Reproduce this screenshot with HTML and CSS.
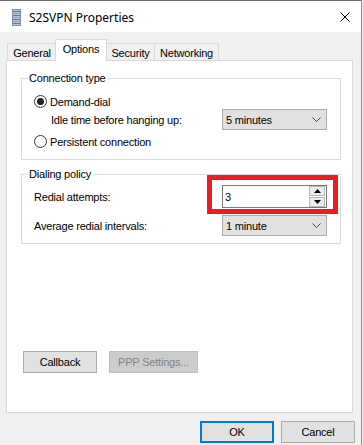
FILE: index.html
```html
<!DOCTYPE html>
<html lang="en">
<head>
<meta charset="UTF-8">
<meta name="viewport" content="width=device-width, initial-scale=1.0">
<title>S2SVPN Properties</title>
<link rel="stylesheet" href="styles.css">
</head>
<body>

<div class="window">
  <!-- title bar -->
  <div class="titlebar">
    <svg class="app-icon" width="9" height="17" viewBox="0 0 9 17">
      <rect x="0.5" y="0.5" width="8" height="16" fill="#b8c6d8" stroke="#7f8fa6"/>
      <rect x="1" y="2" width="7" height="1" fill="#5f7594"/>
      <rect x="1" y="4" width="7" height="1" fill="#8fa3bd"/>
      <rect x="1" y="6" width="7" height="1" fill="#5f7594"/>
      <rect x="1" y="8" width="7" height="1" fill="#8fa3bd"/>
      <rect x="1" y="10" width="7" height="1" fill="#5f7594"/>
      <rect x="1" y="12" width="7" height="1" fill="#8fa3bd"/>
      <rect x="1" y="14" width="7" height="1" fill="#5f7594"/>
    </svg>
    <span class="title">S2SVPN Properties</span>
    <svg class="close" width="10" height="10" viewBox="0 0 10 10">
      <path d="M0.5 0.5 L9.5 9.5 M9.5 0.5 L0.5 9.5" stroke="#000" stroke-width="1"/>
    </svg>
  </div>

  <div class="client">
    <!-- tabs -->
    <div class="tabs">
      <div class="tab tab-general">General</div>
      <div class="tab tab-options selected">Options</div>
      <div class="tab tab-security">Security</div>
      <div class="tab tab-networking">Networking</div>
    </div>

    <div class="panel">
      <fieldset class="group group-connection">
        <legend>Connection type</legend>
        <div class="radio-row">
          <span class="radio checked"></span>
          <span>Demand-dial</span>
        </div>
        <div class="field-row indent">
          <span class="field-label">Idle time before hanging up:</span>
          <div class="select">
            <span>5 minutes</span>
            <svg class="chevron" width="9" height="5" viewBox="0 0 9 5"><path d="M0.5 0.5 L4.5 4.5 L8.5 0.5" fill="none" stroke="#444"/></svg>
          </div>
        </div>
        <div class="radio-row persistent">
          <span class="radio"></span>
          <span>Persistent connection</span>
        </div>
      </fieldset>

      <fieldset class="group group-dialing">
        <legend>Dialing policy</legend>
        <div class="field-row redial">
          <span class="field-label">Redial attempts:</span>
          <div class="spin">
            <span class="spin-value">3</span>
            <div class="spin-buttons">
              <span class="spin-btn"><svg width="7" height="4" viewBox="0 0 7 4"><path d="M3.5 0 L7 4 L0 4 Z" fill="#000"/></svg></span>
              <span class="spin-btn"><svg width="7" height="4" viewBox="0 0 7 4"><path d="M0 0 L7 0 L3.5 4 Z" fill="#000"/></svg></span>
            </div>
            <div class="highlight"></div>
          </div>
        </div>
        <div class="field-row average">
          <span class="field-label">Average redial intervals:</span>
          <div class="select">
            <span>1 minute</span>
            <svg class="chevron" width="9" height="5" viewBox="0 0 9 5"><path d="M0.5 0.5 L4.5 4.5 L8.5 0.5" fill="none" stroke="#444"/></svg>
          </div>
        </div>
      </fieldset>

      <div class="panel-buttons">
        <button class="btn btn-callback">Callback</button>
        <button class="btn btn-ppp" disabled>PPP Settings...</button>
      </div>
    </div>

    <!-- dialog buttons -->
    <div class="dialog-buttons">
      <button class="btn btn-ok">OK</button>
      <button class="btn btn-cancel">Cancel</button>
    </div>
  </div>
</div>

</body>
</html>
```

FILE: styles.css
```css
body {
  margin: 0;
  width: 363px;
  height: 445px;
  overflow: hidden;
  background-color: #f0f0f0;
  font-family: 'Liberation Sans', Arial, sans-serif;
  font-size: 11px;
  letter-spacing: -0.2px;
  color: #000;
}
.window {
  width: 361px;
  height: 445px;
  border-right: 1px solid #8f8f8f;
  background-color: #f0f0f0;
}
.titlebar {
  height: 31px;
  border-top: 1px solid #6d6d6d;
  background-color: #fff;
  display: flex;
  align-items: center;
}
.app-icon {
  margin-left: 12px;
  margin-top: 1px;
}
.title {
  margin-left: 8px;
  font-family: 'Noto Sans', 'Open Sans', sans-serif;
  font-size: 12px;
  letter-spacing: 0;
  margin-top: 1px;
}
.close {
  margin-left: auto;
  margin-right: 11px;
  margin-top: 1px;
}
.client {
  padding: 7px 6px 0 6px;
}

/* tabs */
.tabs {
  display: flex;
  align-items: flex-end;
  height: 21px;
  padding-left: 1px;
}
.tab {
  box-sizing: border-box;
  height: 17px;
  border: 1px solid #d9d9d9;
  border-bottom: none;
  background-color: #f0f0f0;
  display: flex;
  align-items: center;
  justify-content: center;
  padding-top: 1px;
}
.tab-general { width: 50px; }
.tab-options { width: 52px; margin-left: -2px; }
.tab-security { width: 49px; margin-left: -1px; }
.tab-networking { width: 65px; margin-left: -1px; }
.tab.selected {
  height: 22px;
  margin-bottom: -1px;
  background-color: #fff;
  position: relative;
  z-index: 1;
  padding-top: 0;
  padding-bottom: 3px;
}

.panel {
  box-sizing: border-box;
  width: 347px;
  height: 353px;
  border: 1px solid #d9d9d9;
  background-color: #fff;
  padding-top: 11px;
}

/* group boxes */
.group {
  margin: 0 0 0 14px;
  width: 320px;
  box-sizing: border-box;
  border: 1px solid #dcdcdc;
  padding: 0 0 11px 12px;
  min-width: 0;
}
.group legend {
  margin-left: -6px;
  padding: 0 2px 0 1px;
  line-height: 13px;
  height: 13px;
}
.group-dialing {
  margin-top: 8px;
  padding-bottom: 7px;
}
.radio-row {
  display: flex;
  align-items: center;
  height: 13px;
  margin-top: 10px;
}
.radio-row.persistent {
  margin-top: 5px;
}
.radio {
  box-sizing: border-box;
  width: 13px;
  height: 13px;
  border: 1px solid #333;
  border-radius: 50%;
  margin-right: 3px;
  display: flex;
  align-items: center;
  justify-content: center;
}
.radio.checked::after {
  content: "";
  width: 7px;
  height: 7px;
  border-radius: 50%;
  background-color: #222;
}
.field-row {
  display: flex;
  align-items: center;
  margin-top: 1px;
}
.field-row.indent {
  padding-left: 17px;
}
.field-row.redial {
  margin-top: 4px;
}
.field-row.average {
  margin-top: 7px;
}
.field-label {
  flex: 1;
}
.select {
  box-sizing: border-box;
  width: 105px;
  height: 21px;
  margin-right: 13px;
  border: 1px solid #adadad;
  background-color: #e1e1e1;
  display: flex;
  align-items: center;
  padding-left: 3px;
}
.chevron {
  margin-left: auto;
  margin-right: 5px;
}

/* spin box */
.spin {
  position: relative;
  box-sizing: border-box;
  width: 105px;
  height: 23px;
  margin-right: 13px;
  border: 1px solid #7a7a7a;
  background-color: #fff;
  display: flex;
  align-items: center;
  padding-left: 2px;
}
.spin-value {
  flex: 1;
}
.spin-buttons {
  display: flex;
  flex-direction: column;
  gap: 1px;
  margin-right: 1px;
}
.spin-btn {
  box-sizing: border-box;
  width: 16px;
  height: 10px;
  border: 1px solid #b8b8b8;
  background-color: #ececec;
  display: flex;
  align-items: center;
  justify-content: center;
}
.highlight {
  position: absolute;
  left: -16px;
  top: -11px;
  right: -12px;
  bottom: -7px;
  border: 5px solid #ed1c24;
  pointer-events: none;
}

/* buttons */
.btn {
  box-sizing: border-box;
  height: 22px;
  border: 1px solid #adadad;
  background-color: #e1e1e1;
  font-family: 'Liberation Sans', Arial, sans-serif;
  font-size: 11px;
  letter-spacing: -0.2px;
  color: #000;
  padding: 0;
}
.btn:disabled {
  background-color: #cccccc;
  border-color: #bfbfbf;
  color: #838383;
}
.panel-buttons {
  display: flex;
  gap: 12px;
  margin-top: 107px;
  padding-left: 16px;
}
.btn-callback { width: 74px; }
.btn-ppp { width: 89px; }
.dialog-buttons {
  display: flex;
  justify-content: flex-end;
  gap: 7px;
  margin-top: 8px;
  padding-right: 0;
}
.btn-ok {
  width: 74px;
  border: 2px solid #0078d7;
}
.btn-cancel { width: 74px; }
```
